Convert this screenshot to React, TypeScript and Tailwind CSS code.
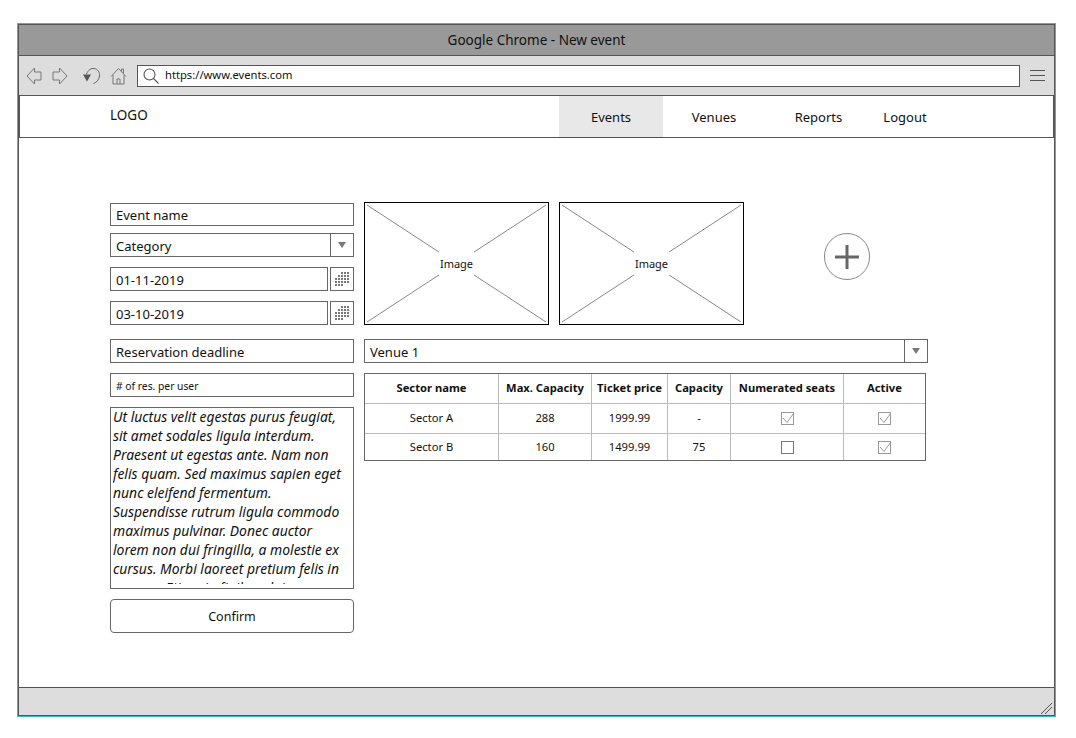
const font = { fontFamily: '"Noto Sans", "Open Sans", sans-serif' }

const description = [
  'Ut luctus velit egestas purus feugiat,',
  'sit amet sodales ligula interdum.',
  'Praesent ut egestas ante. Nam non',
  'felis quam. Sed maximus sapien eget',
  'nunc eleifend fermentum.',
  'Suspendisse rutrum ligula commodo',
  'maximus pulvinar. Donec auctor',
  'lorem non dui fringilla, a molestie ex',
  'cursus. Morbi laoreet pretium felis in',
  'congue. Etiam in finibus dui.',
]

const sectors = [
  { name: 'Sector A', max: '288', price: '1999.99', capacity: '-', numerated: true, active: true, height: 'h-[30px]', line: 'border-b border-[#bbb]' },
  { name: 'Sector B', max: '160', price: '1499.99', capacity: '75', numerated: false, active: true, height: 'h-[26px]', line: '' },
]

const headers = ['Sector name', 'Max. Capacity', 'Ticket price', 'Capacity', 'Numerated seats', 'Active']

const dots = [
  [6, 0], [9, 0], [12, 0],
  [3, 3], [6, 3], [9, 3], [12, 3],
  [0, 6], [3, 6], [6, 6], [9, 6], [12, 6],
  [0, 9], [3, 9], [6, 9], [9, 9], [12, 9],
  [0, 12], [3, 12], [6, 12],
]

const ArrowLeft = () => (
  <svg width="16" height="18" viewBox="0 0 16 18" fill="none" stroke="#777">
    <path d="M8.5 1 1 9 8.5 17V13H15V5H8.5Z" />
  </svg>
)

const ArrowRight = () => (
  <svg width="16" height="18" viewBox="0 0 16 18" fill="none" stroke="#777">
    <path d="M7.5 1 15 9 7.5 17V13H1V5H7.5Z" />
  </svg>
)

const Reload = () => (
  <svg width="18" height="18" viewBox="0 0 18 18" fill="none">
    <path d="M3.5 7C5 3 8.5 1 11 1.5 15 2 17 5.5 16.5 9 16 13 13.5 15.5 10.5 16.5" stroke="#666" />
    <path d="M0 7.5H8L4 14.5Z" fill="#555" />
  </svg>
)

const Home = () => (
  <svg width="17" height="18" viewBox="0 0 17 18" fill="none" stroke="#777">
    <path d="M1 9.5 8.5 1.5 16 9.5M3 8V17H14V8M7 17V12H10V17M11.5 4.5V2H13.5V6.5" />
  </svg>
)

const Search = () => (
  <svg width="16" height="16" viewBox="0 0 16 16" fill="none" stroke="#555" strokeWidth="1.1">
    <circle cx="6.5" cy="6.5" r="5.5" />
    <path d="M10.5 10.5 15.5 15.5" />
  </svg>
)

const CalendarDots = () => (
  <svg width="14" height="14" viewBox="0 0 14 14" fill="#777">
    {dots.map(([x, y]) => (
      <rect key={`${x}-${y}`} x={x} y={y} width="2" height="2" />
    ))}
  </svg>
)

const Caret = () => <div className="w-0 h-0 border-x-[4px] border-x-transparent border-t-[6px] border-t-[#777]" />

const Check = ({ checked }: { checked: boolean }) => (
  <svg width="13" height="13" viewBox="0 0 13 13" fill="none" className="mx-auto block">
    <rect x="0.5" y="0.5" width="12" height="12" stroke={checked ? '#999' : '#777'} />
    {checked && <path d="M2 6 6 10.5 12.5 1.5" stroke="#999" />}
  </svg>
)

const Field = ({ children, className = '' }: { children: React.ReactNode; className?: string }) => (
  <div className={`h-6 border border-[#666] pt-[3px] px-[5px] flex items-center text-[13px] text-[#111] bg-white ${className}`}>
    {children}
  </div>
)

const Select = ({ label, className = '' }: { label: string; className?: string }) => (
  <div className={`h-6 border border-[#666] flex items-center text-[13px] text-[#111] ${className}`}>
    <span className="flex-1 pt-[3px] px-[5px]">{label}</span>
    <div className="w-[23px] h-full border-l border-[#666] flex items-center justify-center">
      <Caret />
    </div>
  </div>
)

const DateField = ({ value, className = '' }: { value: string; className?: string }) => (
  <div className={`flex gap-[2px] h-6 ${className}`}>
    <Field className="flex-1">{value}</Field>
    <div className="w-6 border border-[#666] flex items-center justify-center">
      <CalendarDots />
    </div>
  </div>
)

const ImageBox = () => (
  <div className="relative w-[185px] h-[123px] border border-black flex items-center justify-center">
    <svg className="absolute inset-0 w-full h-full" viewBox="0 0 183 121" preserveAspectRatio="none" fill="none" stroke="#888">
      <path d="M2 2 181 119M181 2 2 119" />
    </svg>
    <span className="relative bg-white w-[35px] h-[25px] pt-[2px] flex items-center justify-center text-[11px] text-[#111]">Image</span>
  </div>
)

export default function App() {
  return (
    <div style={font} className="w-[1076px] h-[738px] bg-white overflow-hidden pt-[24px] pl-[18px]">
      <div className="w-[1037px] h-[692px] border border-[#555] flex flex-col shadow-[0_0_0_1px_#35bcd2]">
        <div className="h-[31px] bg-[#999] border-b border-[#555] flex items-center justify-center text-[13.5px] text-[#111]">
          Google Chrome - New event
        </div>
        <div className="h-[40px] bg-[#ddd] border-b border-[#555] flex items-center pl-[7px] pr-[9px]">
          <ArrowLeft />
          <div className="ml-[10px]"><ArrowRight /></div>
          <div className="ml-[15px]"><Reload /></div>
          <div className="ml-[9px]"><Home /></div>
          <div className="ml-[10px] flex-1 h-[22px] border border-[#555] bg-white flex items-center pl-[5px] text-[11.2px] text-[#111]">
            <Search />
            <span className="ml-[6px]">https://www.events.com</span>
          </div>
          <div className="ml-[10px] w-[15px] flex flex-col gap-[4px]">
            <div className="h-px bg-[#555]" />
            <div className="h-px bg-[#555]" />
            <div className="h-px bg-[#555]" />
          </div>
        </div>
        <div className="h-[42px] border-b border-x border-[#555] flex text-[13px] text-[#111]">
          <div className="w-[539px] pl-[90px] pt-[9px] text-[13.5px]">LOGO</div>
          <div className="w-[104px] pt-[2px] bg-[#e8e8e8] flex items-center justify-center">Events</div>
          <div className="w-[102px] pt-[2px] flex items-center justify-center">Venues</div>
          <div className="w-[107px] pt-[2px] flex items-center justify-center">Reports</div>
          <div className="w-[66px] pt-[2px] flex items-center justify-center">Logout</div>
        </div>
        <div className="flex-1 flex gap-[10px] pl-[91px] pt-[65px]">
          <div className="w-[244px] flex flex-col">
            <Field className="h-[23px]">Event name</Field>
            <Select label="Category" className="mt-[7px]" />
            <DateField value="01-11-2019" className="mt-[10px]" />
            <DateField value="03-10-2019" className="mt-[10px]" />
            <Field className="mt-[14px]">Reservation deadline</Field>
            <Field className="mt-[10px]">
              <span className="text-[10.3px]"># of res. per user</span>
            </Field>
            <div className="mt-[10px] h-[182px] border border-[#666] pl-[2px] italic text-[13.9px] leading-[19px] text-[#111]">
              <div className="h-[176px] overflow-hidden">
                <div className="-mt-px">
                  {description.map((line) => (
                    <div key={line} className="whitespace-nowrap">{line}</div>
                  ))}
                </div>
              </div>
            </div>
            <button className="mt-[10px] h-[34px] pt-[3px] border border-[#666] rounded-[4px] text-[12.5px] text-[#111]">Confirm</button>
          </div>
          <div className="w-[564px] -mt-px flex flex-col">
            <div className="flex items-start">
              <ImageBox />
              <div className="ml-[10px]"><ImageBox /></div>
              <div className="ml-[80px] mt-[31px] w-[46px] h-[47px] rounded-full border border-[#888] flex items-center justify-center">
                <svg width="24" height="24" viewBox="0 0 24 24" stroke="#666" strokeWidth="3">
                  <path d="M12 0V24M0 12H24" />
                </svg>
              </div>
            </div>
            <Select label="Venue 1" className="mt-[14px]" />
            <div className="mt-[10px] w-[562px] border border-[#666]">
              <table className="w-[560px] table-fixed border-separate border-spacing-0 text-[11.2px] text-[#111]">
                <colgroup>
                  <col className="w-[134px]" />
                  <col className="w-[93px]" />
                  <col className="w-[76px]" />
                  <col className="w-[63px]" />
                  <col className="w-[113px]" />
                  <col className="w-[81px]" />
                </colgroup>
                <thead>
                  <tr className="h-[30px] font-bold">
                    {headers.map((h) => (
                      <th key={h} className="border-b border-r last:border-r-0 border-[#bbb] p-0 whitespace-nowrap">{h}</th>
                    ))}
                  </tr>
                </thead>
                <tbody>
                  {sectors.map((s) => (
                    <tr key={s.name} className={`${s.height} text-center`}>
                      <td className={`border-r border-[#bbb] p-0 ${s.line}`}>{s.name}</td>
                      <td className={`border-r border-[#bbb] p-0 ${s.line}`}>{s.max}</td>
                      <td className={`border-r border-[#bbb] p-0 ${s.line}`}>{s.price}</td>
                      <td className={`border-r border-[#bbb] p-0 ${s.line}`}>{s.capacity}</td>
                      <td className={`border-r border-[#bbb] p-0 ${s.line}`}><Check checked={s.numerated} /></td>
                      <td className={`p-0 ${s.line}`}><Check checked={s.active} /></td>
                    </tr>
                  ))}
                </tbody>
              </table>
            </div>
          </div>
        </div>
        <div className="h-[28px] bg-[#ddd] border-t border-[#555] flex items-end justify-end pr-[2px] pb-px">
          <svg width="11" height="11" viewBox="0 0 11 11" stroke="#555" fill="none">
            <path d="M0 11 11 0M4 11 11 4" />
          </svg>
        </div>
      </div>
    </div>
  )
}
